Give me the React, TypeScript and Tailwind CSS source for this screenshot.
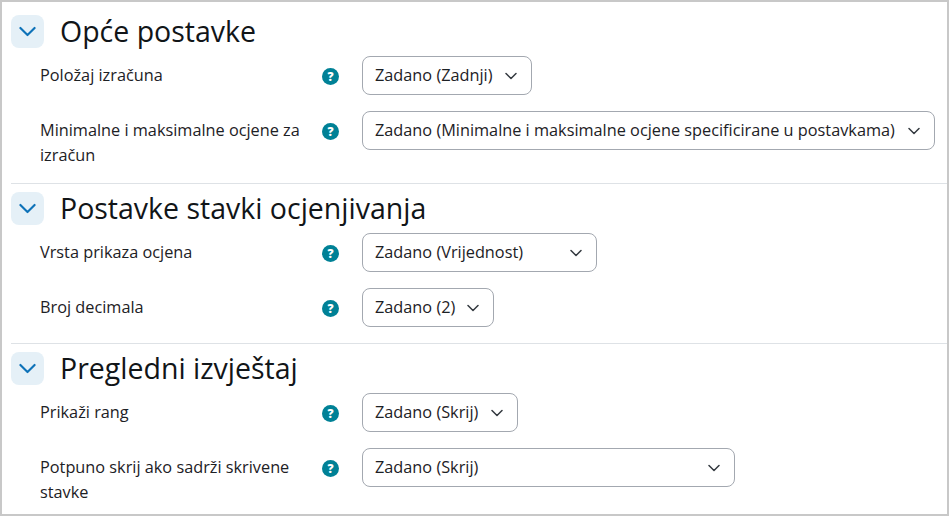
import type { ReactNode } from "react";

function Chevron({ className }: { className: string }) {
  return (
    <svg viewBox="0 0 12 12" className={className} fill="none" stroke="currentColor" strokeWidth="1.5" strokeLinecap="round" strokeLinejoin="round">
      <path d="M1 3.5 6 8.5l5-5" />
    </svg>
  );
}

function Help() {
  return (
    <span className="flex h-[17px] w-[17px] items-center justify-center rounded-full bg-[#008196] text-[12px] font-extrabold leading-none text-white">?</span>
  );
}

function Section({ title, children, last }: { title: string; children: ReactNode; last?: boolean }) {
  return (
    <section>
      <div className="flex h-[33px] items-center gap-[16px] pl-[9px]">
        <span className="flex h-[33px] w-[33px] items-center justify-center rounded-lg bg-[#e5f0f7] text-[#0e72b8]">
          <Chevron className="h-[17px] w-[17px]" />
        </span>
        <h3 className="text-[28.5px] leading-[33px] text-[#111518]">{title}</h3>
      </div>
      <div className="pt-[8px]">{children}</div>
      {!last && <div className="ml-[9px] border-b border-[#dee2e6]" />}
    </section>
  );
}

function Row({ label, value, width }: { label: string; value: string; width: string }) {
  return (
    <div className="flex pb-[16px]">
      <div className="mb-[-1px] w-[320px] shrink-0 pl-[38px] pr-[10px] pt-[7px] text-[16.3px] leading-[25px] text-[#1d2125]">{label}</div>
      <div className="w-[40px] shrink-0 pt-[12px]"><Help /></div>
      <div className={`flex h-[39px] items-center justify-between rounded-lg border border-[#a3a8b0] bg-white pl-[12px] pr-[14px] text-[16.3px] text-[#1d2125] ${width}`}>
        <span>{value}</span>
        <Chevron className="h-3 w-3 text-[#343a40]" />
      </div>
    </div>
  );
}

export default function App() {
  return (
    <div className="h-[516px] w-[949px] overflow-hidden border-2 border-[#c8c8c8] bg-white font-['Open_Sans',sans-serif]">
      <div className="flex flex-col gap-[8px] pt-[13px]">
        <Section title="Opće postavke">
          <Row label="Položaj izračuna" value="Zadano (Zadnji)" width="w-[170px]" />
          <Row label="Minimalne i maksimalne ocjene za izračun" value="Zadano (Minimalne i maksimalne ocjene specificirane u postavkama)" width="w-[573px]" />
        </Section>
        <Section title="Postavke stavki ocjenjivanja">
          <Row label="Vrsta prikaza ocjena" value="Zadano (Vrijednost)" width="w-[235px]" />
          <Row label="Broj decimala" value="Zadano (2)" width="w-[132px]" />
        </Section>
        <Section title="Pregledni izvještaj" last>
          <Row label="Prikaži rang" value="Zadano (Skrij)" width="w-[156px]" />
          <Row label="Potpuno skrij ako sadrži skrivene stavke" value="Zadano (Skrij)" width="w-[373px]" />
        </Section>
      </div>
    </div>
  );
}
